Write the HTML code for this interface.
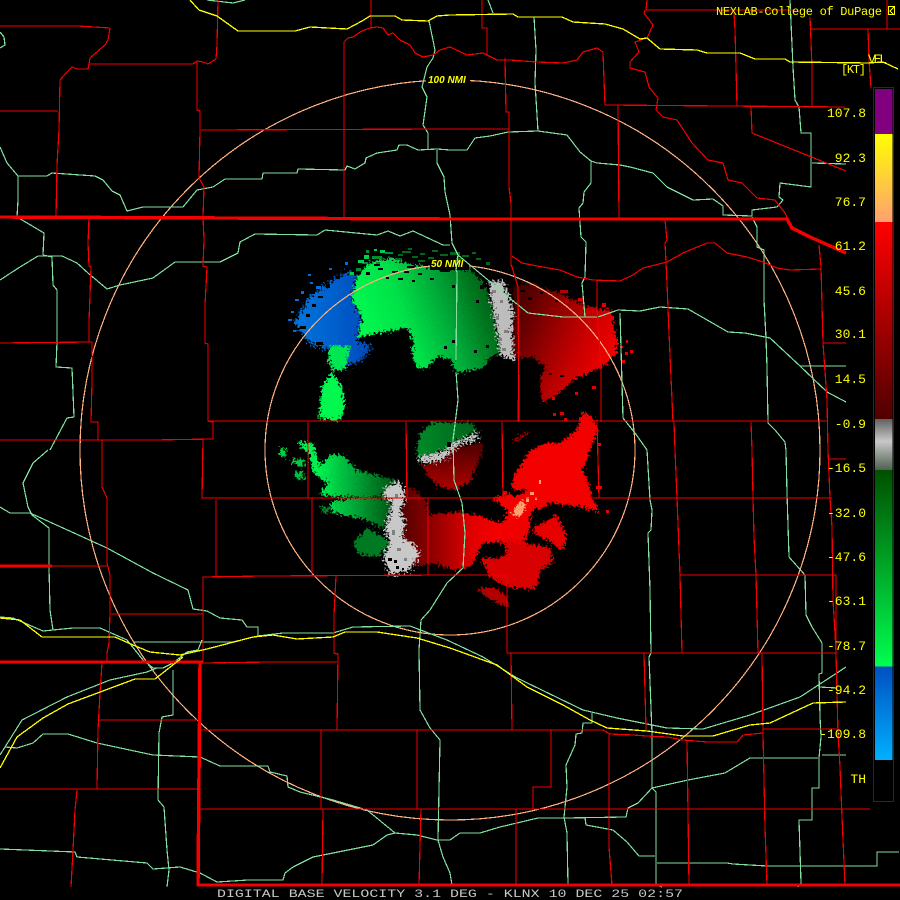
<!DOCTYPE html>
<html><head><meta charset="utf-8"><title>Digital Base Velocity - KLNX</title>
<style>html,body{margin:0;padding:0;background:#000;width:900px;height:900px;overflow:hidden}svg{display:block}
.r polyline,.rt polyline{fill:none;stroke:#f40000;stroke-width:1.2}
.g polyline{fill:none;stroke:#80e0a0;stroke-width:1.2}
.y polyline{fill:none;stroke:#ffff00;stroke-width:1.3}
.rt polyline{stroke-width:3.4}
text{font-family:"Liberation Mono",monospace;fill:#ffff00}
</style></head><body>
<svg width="900" height="900" viewBox="0 0 900 900" xmlns="http://www.w3.org/2000/svg">
<defs>
<filter id="rough" filterUnits="userSpaceOnUse" x="260" y="230" width="400" height="400"><feTurbulence type="fractalNoise" baseFrequency="0.42" numOctaves="3" seed="7"/><feDisplacementMap in="SourceGraphic" scale="11" xChannelSelector="R" yChannelSelector="G"/></filter>
<filter id="rougher" filterUnits="userSpaceOnUse" x="260" y="230" width="400" height="400"><feTurbulence type="fractalNoise" baseFrequency="0.5" numOctaves="2" seed="3"/><feDisplacementMap in="SourceGraphic" scale="16" xChannelSelector="R" yChannelSelector="G"/></filter>
<linearGradient id="gm" gradientUnits="userSpaceOnUse" x1="370" y1="340" x2="500" y2="290"><stop offset="0" stop-color="#00f850"/><stop offset=".3" stop-color="#00e048"/><stop offset=".58" stop-color="#00a838"/><stop offset=".8" stop-color="#007820"/><stop offset="1" stop-color="#004f10"/></linearGradient>
<linearGradient id="gl" gradientUnits="userSpaceOnUse" x1="320" y1="0" x2="395" y2="0"><stop offset="0" stop-color="#00f050"/><stop offset=".45" stop-color="#00a838"/><stop offset="1" stop-color="#005010"/></linearGradient>
<linearGradient id="rr" gradientUnits="userSpaceOnUse" x1="513" y1="300" x2="615" y2="345"><stop offset="0" stop-color="#400000"/><stop offset=".4" stop-color="#900000"/><stop offset=".72" stop-color="#c80000"/><stop offset="1" stop-color="#f00000"/></linearGradient>
<linearGradient id="rc" gradientUnits="userSpaceOnUse" x1="400" y1="0" x2="510" y2="0"><stop offset="0" stop-color="#500000"/><stop offset=".3" stop-color="#900000"/><stop offset=".65" stop-color="#e00000"/><stop offset="1" stop-color="#ff0000"/></linearGradient>
<linearGradient id="rd" gradientUnits="userSpaceOnUse" x1="0" y1="445" x2="0" y2="490"><stop offset="0" stop-color="#500000"/><stop offset="1" stop-color="#b00000"/></linearGradient>
<linearGradient id="gc" gradientUnits="userSpaceOnUse" x1="420" y1="0" x2="480" y2="0"><stop offset="0" stop-color="#008828"/><stop offset="1" stop-color="#006018"/></linearGradient>
<linearGradient id="bl" gradientUnits="userSpaceOnUse" x1="290" y1="0" x2="360" y2="0"><stop offset="0" stop-color="#0078e0"/><stop offset="1" stop-color="#0050c0"/></linearGradient>
<linearGradient id="bar" gradientUnits="userSpaceOnUse" x1="0" y1="89" x2="0" y2="760">
<stop offset="0" stop-color="#800080"/><stop offset=".0671" stop-color="#800080"/><stop offset=".0671" stop-color="#ffff00"/><stop offset=".198" stop-color="#ffa070"/><stop offset=".198" stop-color="#ff0000"/><stop offset=".4918" stop-color="#500000"/><stop offset=".4918" stop-color="#606060"/><stop offset=".525" stop-color="#c8c8c8"/><stop offset=".568" stop-color="#506050"/><stop offset=".568" stop-color="#005000"/><stop offset=".861" stop-color="#00ff50"/><stop offset=".861" stop-color="#0050c0"/><stop offset="1" stop-color="#00b0ff"/></linearGradient>
</defs>
<rect width="900" height="900" fill="#000"/>

<g filter="url(#rougher)">
<polygon fill="url(#bl)" points="294,322 310,296 333,280 350,270 357,277 352,298 362,318 357,340 372,347 360,362 342,366 330,350 312,345 304,336"/>
</g>
<path fill="#000" shape-rendering="crispEdges" d="M296 305h5v3h-5zM302 297h4v3h-4zM310 290h5v4h-5zM292 316h6v2h-6zM300 326h6v3h-6zM312 304h4v3h-4zM318 296h5v2h-5zM326 284h4v4h-4zM306 314h4v3h-4zM316 342h7v3h-7zM326 349h6v3h-6zM336 276h4v3h-4zM344 270h3v3h-3zM322 279h4v2h-4z"/>
<path fill="#0070d8" shape-rendering="crispEdges" d="M288 319h4v2h-4zM291 311h3v2h-3zM295 299h4v2h-4zM301 291h3v3h-3zM310 282h3v2h-3zM316 286h5v3h-5zM308 274h3v2h-3zM329 268h3v2h-3zM345 262h3v3h-3zM293 330h3v2h-3z"/>
<g filter="url(#rough)">
<polygon fill="url(#gm)" points="352,298 357,277 370,262 390,258 413,265 437,268 470,270 483,283 492,303 497,333 500,353 490,357 483,368 457,373 450,358 437,357 427,368 417,368 412,355 413,338 407,328 380,333 358,337 362,318"/>
<polygon fill="#00f850" points="332,372 342,387 345,407 340,421 319,418 322,387"/>
<polygon fill="#00e850" points="330,345 350,347 346,368 333,371 328,360"/>
<polygon fill="url(#rr)" points="513,285 530,283 557,293 590,307 610,310 617,340 617,353 603,367 573,380 560,393 542,403 540,380 545,367 533,357 515,358 512,337 513,310"/>
<polygon fill="url(#gc)" points="420,433 433,422 473,423 477,432 457,440 447,450 418,458 417,448"/>
<polygon fill="url(#rd)" points="422,465 440,460 453,447 483,442 483,450 470,483 453,490 437,485 427,475"/>
<polygon fill="url(#gl)" points="297,442 313,443 320,467 330,455 342,455 357,470 383,477 398,480 385,495 367,497 337,497 327,495 320,495 328,482 323,480 313,473 310,455"/>
<polygon fill="url(#gl)" points="330,503 350,498 383,498 392,503 385,530 367,520 353,517 333,513"/>
<polygon fill="#007a20" points="367,528 383,537 390,543 377,557 360,555 353,543"/>
<polygon fill="#00d040" points="280,448 287,450 285,458 280,455"/>
<polygon fill="#00d040" points="292,458 305,460 303,468 292,463"/>
<polygon fill="#00c040" points="295,472 305,472 303,480 295,478"/>
<polygon fill="#008828" points="322,505 330,510 325,515 320,508"/>
<polygon fill="url(#rc)" points="403,488 413,488 427,502 428,515 453,512 477,515 500,523 507,530 503,542 483,543 477,555 470,567 453,570 433,563 417,567 410,557 402,537 405,523 400,510 405,500"/>
<polygon fill="#d80000" points="503,542 517,533 527,543 550,548 553,563 540,570 537,587 527,590 503,585 490,577 480,558 500,558 507,553"/>
<polygon fill="#f00000" points="500,523 517,513 530,517 530,530 523,543 510,540 503,542"/>
<polygon fill="#e80000" points="533,528 557,515 567,537 563,550 547,540 533,533"/>
<polygon fill="#b00000" points="477,588 497,588 508,598 508,607 490,600"/>
<polygon fill="#f40000" points="583,410 595,420 598,430 593,443 583,470 590,487 592,498 600,512 580,507 550,503 540,510 535,507 530,517 510,523 503,530 507,510 492,498 510,493 515,497 527,490 512,490 513,477 530,450 547,443 560,443 577,430"/>
<polygon fill="#ffa070" points="512,513 522,499 526,507 518,518"/>
<polygon fill="#a00000" points="513,440 528,431 530,433 516,442"/>
</g>
<g filter="url(#rougher)">
<polygon fill="#bdbdbd" points="489,282 503,281 513,310 512,337 515,360 500,355 497,333 492,303"/>
<polygon fill="#c4c4c4" points="418,457 443,452 453,442 480,432 477,439 455,447 447,457 437,462 420,462"/>
<polygon fill="#c8c8c8" points="398,481 403,487 405,500 400,510 405,523 402,537 413,543 420,555 410,570 390,575 385,563 383,557 390,543 385,530 392,503 384,497 385,488"/>
</g>
<g shape-rendering="crispEdges">
<path fill="#009030" d="M362 262h6v2h-6zM372 256h10v3h-10zM385 252h8v2h-8zM356 268h5v3h-5zM366 250h3v3h-3zM376 262h4v2h-4z"/>
<path fill="#00d048" d="M358 260h6v3h-6zM364 255h5v4h-5zM380 250h5v3h-5zM350 272h4v3h-4zM374 249h3v2h-3zM389 258h5v2h-5z"/>
<path fill="#006818" d="M395 258h7v2h-7zM402 251h9v2h-9zM412 256h6v2h-6zM420 253h5v2h-5zM428 257h6v2h-6zM440 254h8v2h-8zM450 252h10v3h-10zM462 255h7v2h-7zM476 258h5v2h-5zM398 254h5v2h-5zM408 248h4v2h-4zM432 250h6v2h-6zM418 260h7v2h-7zM456 258h6v2h-6zM472 252h4v2h-4zM486 262h4v3h-4z"/>
<path fill="#000" d="M366 272h4v3h-4zM378 268h5v2h-5zM392 271h6v2h-6zM404 271h5v2h-5zM418 273h4v2h-4zM386 277h3v2h-3zM430 278h4v2h-4zM398 278h5v2h-5zM412 280h3v2h-3zM440 270h10v2h-10zM374 264h6v2h-6zM407 266h7v2h-7zM452 285h3v3h-3zM476 300h3v3h-3zM480 285h4v4h-4z"/>
<path fill="#000" d="M444 346h3v3h-3zM452 340h3v3h-3zM474 350h3v3h-3zM486 345h3v3h-3z"/>
<path fill="#808080" d="M492 290h4v3h-4zM500 300h3v3h-3zM496 316h3v4h-3zM504 330h4v3h-4zM502 348h4v3h-4zM499 338h3v3h-3z"/>
<path fill="#808080" d="M395 494h3v4h-3zM388 510h3v3h-3zM392 530h3v5h-3zM397 548h4v3h-4zM404 558h3v3h-3z"/>
<path fill="#000" d="M388 558h4v3h-4zM396 566h3v3h-3zM394 560h3v3h-3zM402 568h2v2h-2zM386 566h2v3h-2zM447 442h4v5h-4z"/>
<path fill="#b00000" d="M560 290h8v3h-8zM565 300h4v3h-4z"/>
<path fill="#000" d="M528 297h4v3h-4zM540 292h3v2h-3zM555 300h3v2h-3zM520 290h5v2h-5zM549 373h3v2h-3zM560 375h4v2h-4z"/>
<path fill="#e00000" d="M578 298h6v3h-6zM602 303h4v4h-4zM625 352h3v3h-3zM630 350h3v3h-3zM622 360h3v3h-3zM592 386h4v3h-4zM553 413h3v3h-3zM560 412h4v3h-4zM564 418h3v3h-3zM611 316h3v4h-3zM626 340h2v3h-2zM620 346h3v2h-3zM575 392h3v3h-3zM552 397h3v3h-3z"/>
<path fill="#f00000" d="M598 443h3v3h-3zM596 486h6v3h-6zM588 432h3v2h-3zM503 491h4v3h-4zM498 497h3v2h-3zM587 505h4v2h-4zM606 510h3v3h-3z"/>
<path fill="#ffa070" d="M526 497h3v5h-3zM539 480h2v4h-2zM530 492h4v3h-4zM535 497h2v3h-2zM516 506h2v3h-2z"/>
</g>

<g shape-rendering="crispEdges">
<g fill="none" stroke="#ffb080" stroke-width="1.2"><circle cx="450" cy="450" r="370"/><circle cx="450" cy="450" r="185"/></g>
<rect x="426" y="76" width="44" height="9" fill="#000"/>
<rect x="430" y="261" width="39" height="9" fill="#000"/>

<g class="g">
<polyline points="207,0 233,3 245,0"/>
<polyline points="0,32 4,37 5,45 0,48"/>
<polyline points="0,147 7,163 18,176 18,200 17,217 44,233 43,255"/>
<polyline points="18,176 47,176 52,173 95,176 103,180 112,191 120,195 127,211 143,207 183,207 197,190 213,187 225,179 262,179 263,173 297,173 298,169 345,170 347,166 355,169 365,163 366,158 377,153 397,150 399,145 407,145 418,150 437,149 450,150 467,150 475,138 490,136 508,132 538,131 567,135 580,152 591,161 597,163 620,165 630,167 653,173 667,187 693,200 713,199 723,206 723,215 752,216 752,210 777,207 783,200 779,197 780,183 811,187 811,133 801,133 799,107 795,100 793,67 790,0"/>
<polyline points="812,163 846,164"/>
<polyline points="752,217 757,227 757,247 764,250 764,300 766,338 767,367 768,423 775,430 785,442 786,450 787,493 789,557 805,575 806,615 812,627 822,643 822,673 819,674 820,717 821,737 819,758 819,788 812,788 812,820 799,820 801,883 798,887"/>
<polyline points="822,755 846,755"/><polyline points="819,687 837,688"/>
<polyline points="488,0 493,13"/>
<polyline points="534,17 536,50 535,83 538,131"/>
<polyline points="591,161 591,183 584,192 583,203 579,208 581,237 586,242 585,277 582,283 585,317"/>
<polyline points="429,21 435,50 433,58 427,67 422,87 427,97 423,125 428,133 428,150"/>
<polyline points="437,150 437,163 444,177 445,192 450,215 452,243 458,255 470,265 512,300 528,313 563,317 598,317 618,310 640,311 660,307 688,309 728,332 745,333 770,338 800,366 827,392 846,402"/>
<polyline points="800,366 846,366"/>
<polyline points="620,313 623,418 635,433 647,450 650,500 652,510 651,530 648,533 650,590 651,653 649,657 652,733 652,788 656,792 656,885 662,887"/>
<polyline points="458,255 456,270 457,272 456,360"/>
<polyline points="456,372 457,385 458,400 453,440 454,480 462,503 465,533 463,568 447,583 430,610 421,620 419,650 420,710 430,728 440,740 438,840 443,857 450,873 452,885"/>
<polyline points="48,450 33,463 23,483 28,507 32,515 49,528 49,567 50,610 53,630"/>
<polyline points="43,255 52,257 53,285 57,290 57,342 56,367 72,368 74,417 67,418 50,450"/>
<polyline points="0,280 20,267 38,256 62,256 77,263 88,273 107,289 120,285 153,278 175,262 220,262 238,253 240,242 255,234 317,235 325,230 377,235 388,231 400,236 413,231 443,245 450,245"/>
<polyline points="0,507 10,513 30,513 107,548 153,573 188,590 193,609 207,611 220,618 242,620 247,627 258,627 258,636"/>
<polyline points="0,617 13,618 43,631 73,628 100,628 127,640 143,660 153,668 163,668 173,663 187,652 198,650 202,640"/>
<polyline points="133,642 233,642 258,636 283,633 333,633 353,627 410,626 447,640 483,657 517,678 583,710 617,718 667,728 703,729 750,715 800,697 846,667"/>
<polyline points="0,755 22,720 67,697 110,680 147,672 157,668"/>
<polyline points="173,670 173,715 162,717 159,733 158,800 164,807 167,850 169,870 167,887"/>
<polyline points="5,747 17,748 33,743 43,734 68,734 97,743 153,755 200,757 220,766 268,766 270,772 287,776 288,787 300,792 333,800 367,810 395,833 417,835 437,840 450,840 460,833 480,833 500,827 538,818 565,818 626,817 628,808 638,803 652,788 688,780 725,773 750,758 818,758"/>
<polyline points="395,833 387,835 373,845 333,853 313,857 293,867 285,873 283,880 248,880 217,882 200,873 180,867 153,869 147,863 77,857 75,852 0,849"/>
<polyline points="592,713 592,723 583,723 582,733 576,734 575,745 566,765 567,787 564,817 567,833 568,885"/>
<polyline points="585,818 586,825 613,830 627,842 639,856 655,856"/>
<polyline points="657,863 727,863 733,864 767,866 877,866 877,852 899,852"/>
</g>

<g class="r">
<polyline points="0,26 78,26 110,28 108,40 105,45 90,58 89,64 88,69 77,69 72,67 68,71 60,80 59,130 57,165 56,217"/>
<polyline points="0,111 58,111"/>
<polyline points="89,64 193,64 197,61 203,62 208,64 216,59 217,45 218,0"/>
<polyline points="197,62 197,110 200,111 200,130 199,178 204,187 203,217 204,240 203,266 207,267 205,305 205,343 208,344 208,421 212,422 213,422 213,439 153,440 0,440"/>
<polyline points="201,130 450,129 509,129"/>
<polyline points="344,217 344,42 348,38 353,37 360,32 370,28 377,27 383,28 388,35 393,33 400,40 410,45 415,53 423,57 433,55 440,50 450,47 467,55 483,53 497,60 510,60 537,62 563,63 577,60 583,52 597,48 603,52 604,80 605,105 845,107"/>
<polyline points="371,0 371,28"/>
<polyline points="482,0 482,28 487,28 487,55"/>
<polyline points="505,58 506,112 509,112 509,187 511,203 511,265 512,267 518,287 519,421"/>
<polyline points="647,0 646,10 795,10"/>
<polyline points="734,13 735,30 736,67 737,106"/>
<polyline points="645,10 644,13 653,25 647,38 635,42 639,52 630,62 630,68 645,72 649,87 658,98 656,110 663,117 677,120 692,143 708,160 723,163 728,180 742,183 757,198 775,200 785,213 788,220"/>
<polyline points="810,17 812,67 812,106"/>
<polyline points="811,29 900,29"/><polyline points="887,0 887,29"/><polyline points="868,29 869,60 871,88"/>
<polyline points="751,107 752,133 846,171"/>
<polyline points="665,220 667,240 665,243 667,283 669,333 673,422"/>
<polyline points="618,105 619,218"/>
<polyline points="512,256 522,263 537,266 560,270 577,277 593,280 620,281 633,275 643,268 655,265 667,262 683,253 707,243 715,243 727,253 747,257 763,262 777,268 790,270 820,269 821,270"/>
<polyline points="819,245 821,267 823,343 827,400 828,450 830,498 832,527 833,600 835,633 836,653 838,733 840,767 842,817 845,885"/>
<polyline points="823,343 846,343"/><polyline points="828,459 846,459"/>
<polyline points="597,280 597,307 601,367 601,422"/>
<polyline points="208,421 827,421"/>
<polyline points="0,343 92,342 92,382 91,422 98,422 98,440"/>
<polyline points="89,218 88,243 89,266 91,267 89,322 89,342"/>
<polyline points="102,440 102,487 107,498 107,563 110,575 110,613 109,643 107,653 107,662"/>
<polyline points="203,440 202,498 832,498"/>
<polyline points="308,422 308,498"/><polyline points="406,422 407,498"/><polyline points="502,422 503,498"/><polyline points="518,400 518,422"/><polyline points="597,422 599,498"/>
<polyline points="674,422 675,450 677,498 680,575 682,653"/>
<polyline points="751,422 752,450 753,498 754,537 756,575 758,653"/>
<polyline points="762,653 763,733 765,827 767,885"/>
<polyline points="680,575 836,575 836,653"/>
<polyline points="203,662 203,577 263,576 450,575 507,575 507,653 836,653"/>
<polyline points="511,653 512,730"/><polyline points="644,653 646,730"/>
<polyline points="216,500 216,576"/><polyline points="312,498 312,575"/><polyline points="428,498 428,575"/>
<polyline points="336,576 334,615 334,653 338,654 337,730"/>
<polyline points="203,663 270,662 337,662"/>
<polyline points="52,566 107,566"/>
<polyline points="111,614 203,614"/>
<polyline points="102,663 100,693 98,730 97,789"/>
<polyline points="99,720 200,720"/>
<polyline points="0,789 199,789"/>
<polyline points="77,790 75,810 73,850 71,887"/>
<polyline points="201,730 603,730 610,734 633,735 647,736 667,737 683,740 707,742 737,742 743,735 763,733 763,729 837,729"/>
<polyline points="551,730 551,787 533,787 533,809"/>
<polyline points="321,730 321,809"/><polyline points="417,730 417,809"/>
<polyline points="201,809 870,809"/>
<polyline points="323,809 322,885"/><polyline points="421,809 419,885"/><polyline points="516,809 516,885"/>
<polyline points="609,734 609,847 612,885"/><polyline points="687,740 689,885"/>
</g>
<g class="rt">
<polyline points="0,217 450,219 787,219 792,228 810,237 846,253"/>
<polyline points="0,566 52,566"/>
<polyline points="0,662 203,662"/>
<polyline points="200,663 198,885 900,885"/>
</g>
<g class="y">
<polyline points="190,0 199,10 217,16 238,31 295,31 310,27 347,29 362,21 370,16 395,16 402,20 428,21 437,16 450,15 513,14 518,17 562,17 573,22 605,24 623,29 640,39 647,38 660,49 697,50 707,53 740,53 755,59 785,59 790,62 868,63 883,62 898,69"/>
<polyline points="0,618 20,620 42,637 115,637 133,645 150,652 180,655 207,649 253,637 273,635 297,639 333,637 345,632 377,632 417,638 450,648 497,665 527,687 563,705 590,720 607,728 647,731 683,736 713,736 750,725 770,723 813,703 846,702"/>
<polyline points="0,768 17,737 43,718 68,704 135,679 155,679 183,657"/>
</g>

<rect x="873.5" y="87.5" width="20" height="714" fill="#000" stroke="#600070" stroke-width="1"/>
<rect x="875" y="89" width="17.5" height="671" fill="url(#bar)"/>
</g>

<text x="428" y="83" style='font:italic bold 10px "Liberation Sans",sans-serif;fill:#ffff00'>100 NMI</text>
<text x="431" y="267" style='font:italic bold 10px "Liberation Sans",sans-serif;fill:#ffff00'>50 NMI</text>

<text x="716" y="15" font-size="12" textLength="166" lengthAdjust="spacing">NEXLAB-College of DuPage</text>
<g fill="none" stroke="#ffff00" stroke-width="1" shape-rendering="crispEdges"><rect x="888.5" y="6.5" width="6" height="8"/><polyline points="894,7 890,11 894,15"/></g>
<text x="868" y="63" font-size="13" textLength="19" lengthAdjust="spacing">VEL</text>
<text x="841" y="73" font-size="12" textLength="25" lengthAdjust="spacing">[KT]</text>
<g font-size="13" text-anchor="end">
<text x="866" y="117" text-anchor="end" font-size="13">107.8</text>
<text x="866" y="162" text-anchor="end" font-size="13">92.3</text>
<text x="866" y="206" text-anchor="end" font-size="13">76.7</text>
<text x="866" y="250" text-anchor="end" font-size="13">61.2</text>
<text x="866" y="295" text-anchor="end" font-size="13">45.6</text>
<text x="866" y="338" text-anchor="end" font-size="13">30.1</text>
<text x="866" y="383" text-anchor="end" font-size="13">14.5</text>
<text x="866" y="428" text-anchor="end" font-size="13">-0.9</text>
<text x="866" y="472" text-anchor="end" font-size="13">-16.5</text>
<text x="866" y="517" text-anchor="end" font-size="13">-32.0</text>
<text x="866" y="561" text-anchor="end" font-size="13">-47.6</text>
<text x="866" y="605" text-anchor="end" font-size="13">-63.1</text>
<text x="866" y="650" text-anchor="end" font-size="13">-78.7</text>
<text x="866" y="694" text-anchor="end" font-size="13">-94.2</text>
<text x="866" y="738" text-anchor="end" font-size="13">-109.8</text>
<text x="866" y="783" text-anchor="end" font-size="13">TH</text>
</g>
<text x="217" y="897" font-size="11" textLength="466" lengthAdjust="spacingAndGlyphs" style="fill:#c8c8c8">DIGITAL BASE VELOCITY 3.1 DEG - KLNX 10 DEC 25 02:57</text>
</svg>
</body></html>
